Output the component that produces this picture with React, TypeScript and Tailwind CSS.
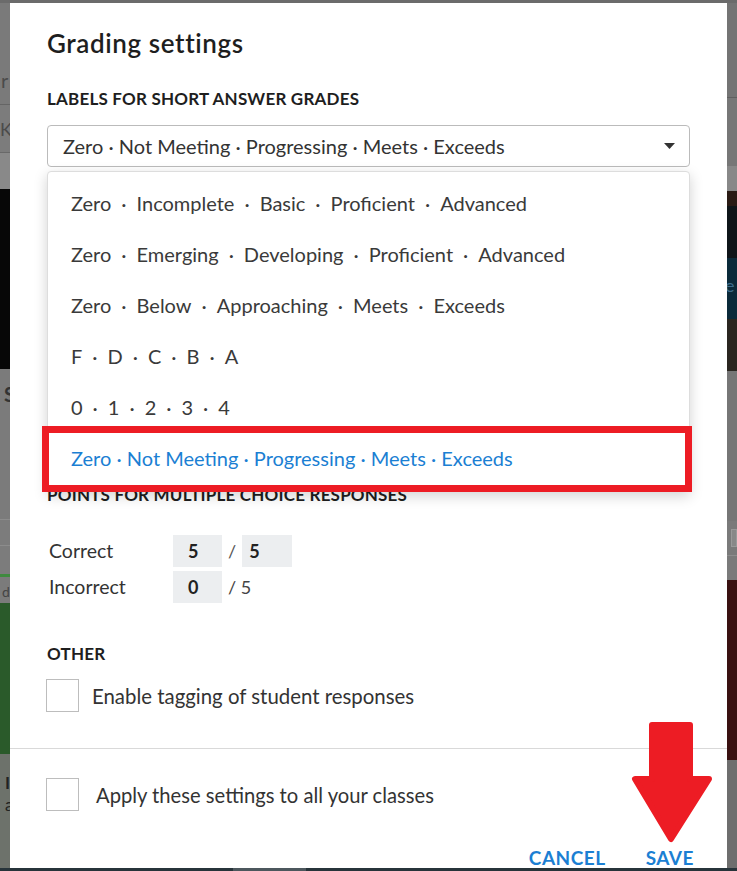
const scales: string[][] = [
  ['Zero', 'Incomplete', 'Basic', 'Proficient', 'Advanced'],
  ['Zero', 'Emerging', 'Developing', 'Proficient', 'Advanced'],
  ['Zero', 'Below', 'Approaching', 'Meets', 'Exceeds'],
  ['F', 'D', 'C', 'B', 'A'],
  ['0', '1', '2', '3', '4'],
];

function Checkbox() {
  return <div className="w-[33px] h-[33px] border border-[#bdbdbd] bg-white shrink-0" />;
}

export default function App() {
  return (
    <div className="relative w-[737px] h-[871px] overflow-hidden flex flex-col bg-[#777]" style={{ fontFamily: 'Lato, "Noto Sans", sans-serif' }}>
      {/* Backdrop page (dimmed) */}
      <div className="h-[3px] bg-[#6b6b6b]" />
      <div className="flex-1 flex">
        {/* left edge of page behind */}
        <div className="w-[10px] flex flex-col overflow-hidden text-[#4b4b4b] text-[20px] leading-none">
          <div className="h-[101px] bg-[#7a7a7a] flex items-end pb-[14px] pl-[1px]">r</div>
          <div className="h-px bg-[#656565]" />
          <div className="h-[47px] bg-[#7c7c7c] flex items-center text-[18px]">K</div>
          <div className="h-px bg-[#696969]" />
          <div className="h-[36px] bg-[#898989]" />
          <div className="h-[180px] bg-[#070707]" />
          <div className="h-[150px] bg-[#7b7b7b] pt-[15px] pl-[4px] font-bold text-[#333]">S</div>
          <div className="h-px bg-[#8c8c8c]" />
          <div className="h-[57px] bg-[#7c7c7c] flex flex-col justify-end">
            <div className="h-px bg-[#8c8c8c] mb-[28px]" />
            <div className="h-[3px] bg-[#3f8a3f]" />
          </div>
          <div className="h-[26px] bg-[#7b7b7b] text-[14px] pl-[2px] pt-[8px] text-[#444]">d</div>
          <div className="h-[151px] bg-[#2a5a2a]" />
          <div className="flex-1 bg-[#6d726b] pt-[18px] pl-[5px] font-bold text-[#222] text-[17px] leading-[22px]">
            <div>I</div>
            <div className="font-normal">a</div>
          </div>
        </div>
        <div className="flex-1 bg-[#7a7a7a]" />
        {/* right edge of page behind */}
        <div className="w-[10px] flex flex-col overflow-hidden">
          <div className="h-[94px] bg-[#747474]" />
          <div className="h-px bg-[#5f5f5f]" />
          <div className="h-[68px] bg-[#777]" />
          <div className="h-[25px] bg-[#888]" />
          <div className="h-[15px] bg-[#2a1b15]" />
          <div className="h-[52px] bg-[#0f1519]" />
          <div className="h-[61px] bg-[#0b2a3a] text-[#3d6c8a] text-[18px] pt-[14px] -ml-[2px]">e</div>
          <div className="h-[52px] bg-[#2a2620]" />
          <div className="h-[150px] bg-[#767676]" />
          <div className="h-[34px] bg-[#7a7a7a] flex items-center">
            <div className="w-[8px] h-[18px] border border-[#999] bg-[#888] ml-[4px]" />
          </div>
          <div className="h-px bg-[#8d8d8d]" />
          <div className="h-[24px] bg-[#7a7a7a]" />
          <div className="h-[180px] bg-[#3a1111]" />
          <div className="flex-1 bg-[#6e6e6e]" />
        </div>
      </div>
      <div className="h-[3px] bg-[#27343a] flex">
        <div className="w-[233px]" />
        <div className="w-[73px] bg-[#4c575d]" />
      </div>

      {/* Modal */}
      <div className="absolute left-[10px] top-[3px] w-[717px] h-[865px] bg-white overflow-hidden flex flex-col">
        <div className="px-[37px]">
          <h1 className="pt-[25px] text-[26px] leading-[30px] font-semibold tracking-[0.6px] text-[#1e1e1e]">Grading settings</h1>
          <h2 className="mt-[31px] text-[17px] leading-[20px] font-bold tracking-[0.2px] text-[#1e1e1e] uppercase">Labels for short answer grades</h2>

          <div className="relative mt-[16px]">
            <div className="h-[42px] border border-[#bbb] rounded-[4px] flex items-center justify-between pl-[15px] pr-[14px] text-[20px] leading-[24px] text-[#333]">
              <span>Zero · Not Meeting · Progressing · Meets · Exceeds</span>
              <svg width="11" height="6" viewBox="0 0 11 6">
                <path d="M0 0 H11 L5.5 6 Z" fill="#333" />
              </svg>
            </div>

            {/* open dropdown */}
            <div className="absolute left-0 right-0 top-[46px] z-10 bg-white border border-[#ddd] rounded-t-[4px] shadow-[0_4px_14px_rgba(0,0,0,0.18)] pt-[5px] pb-[8px]">
              {scales.map((words, i) => (
                <div key={i} className="h-[51px] flex items-center pl-[23px] text-[20px] leading-[24px] text-[#3a3a3a]">
                  {words.map((w, j) => (
                    <span key={j} className="flex items-center">
                      {j > 0 && <span className="mx-[10px]">·</span>}
                      {w}
                    </span>
                  ))}
                </div>
              ))}
              <div className="h-[51px] flex items-center pl-[23px] text-[20px] leading-[24px] text-[#1b7fd3]">
                Zero · Not Meeting · Progressing · Meets · Exceeds
              </div>
            </div>

            {/* annotation box */}
            <div className="absolute z-20 left-[-5px] top-[301px] w-[650px] h-[66px] border-[7px] border-[#ed1c24]" />
          </div>

          <h2 className="mt-[318px] text-[17px] leading-[20px] font-bold tracking-[0.2px] text-[#1e1e1e] uppercase">Points for multiple choice responses</h2>

          <div className="mt-[30px] flex flex-col gap-[4px] pl-[2px] text-[19.5px] leading-[24px] text-[#333]">
            <div className="flex items-center h-[32px]">
              <span className="w-[124px]">Correct</span>
              <div className="w-[49px] h-[32px] bg-[#eceef0] flex items-center pl-[15px] text-[18px] font-bold text-[#222]">5</div>
              <span className="mx-[6px] text-[18px] text-[#555]">/</span>
              <div className="w-[50px] h-[32px] bg-[#eceef0] flex items-center pl-[7px] text-[18px] font-bold text-[#222]">5</div>
            </div>
            <div className="flex items-center h-[32px]">
              <span className="w-[124px]">Incorrect</span>
              <div className="w-[49px] h-[32px] bg-[#eceef0] flex items-center pl-[15px] text-[18px] font-bold text-[#222]">0</div>
              <span className="ml-[6px] text-[18px] text-[#444]">/ 5</span>
            </div>
          </div>

          <h2 className="mt-[41px] text-[17px] leading-[20px] font-bold tracking-[0.2px] text-[#1e1e1e] uppercase">Other</h2>
          <div className="mt-[15px] -ml-px flex items-center gap-[13px] text-[20.4px] leading-[24px] text-[#333]">
            <Checkbox />
            <span>Enable tagging of student responses</span>
          </div>
        </div>

        <div className="mt-[36px] h-px shrink-0 bg-[#d9d9d9]" />

        <div className="px-[36px] mt-[29px] flex items-center gap-[17px] text-[20.2px] leading-[24px] text-[#333]">
          <Checkbox />
          <span>Apply these settings to all your classes</span>
        </div>

        <div className="mt-[37px] flex justify-end gap-[40px] pr-[33px] text-[19px] leading-[20px] font-bold tracking-[0.5px] text-[#1b7fd3]">
          <button>CANCEL</button>
          <button>SAVE</button>
        </div>
      </div>

      {/* red arrow annotation */}
      <svg className="absolute left-[628px] top-[718px]" width="90" height="130" viewBox="0 0 90 130">
        <path
          d="M24 7 H62 V61 H81 L43 121 L7 61 H24 Z"
          fill="#ed1c24"
          stroke="#ed1c24"
          strokeWidth="6"
          strokeLinejoin="round"
        />
      </svg>
    </div>
  );
}
